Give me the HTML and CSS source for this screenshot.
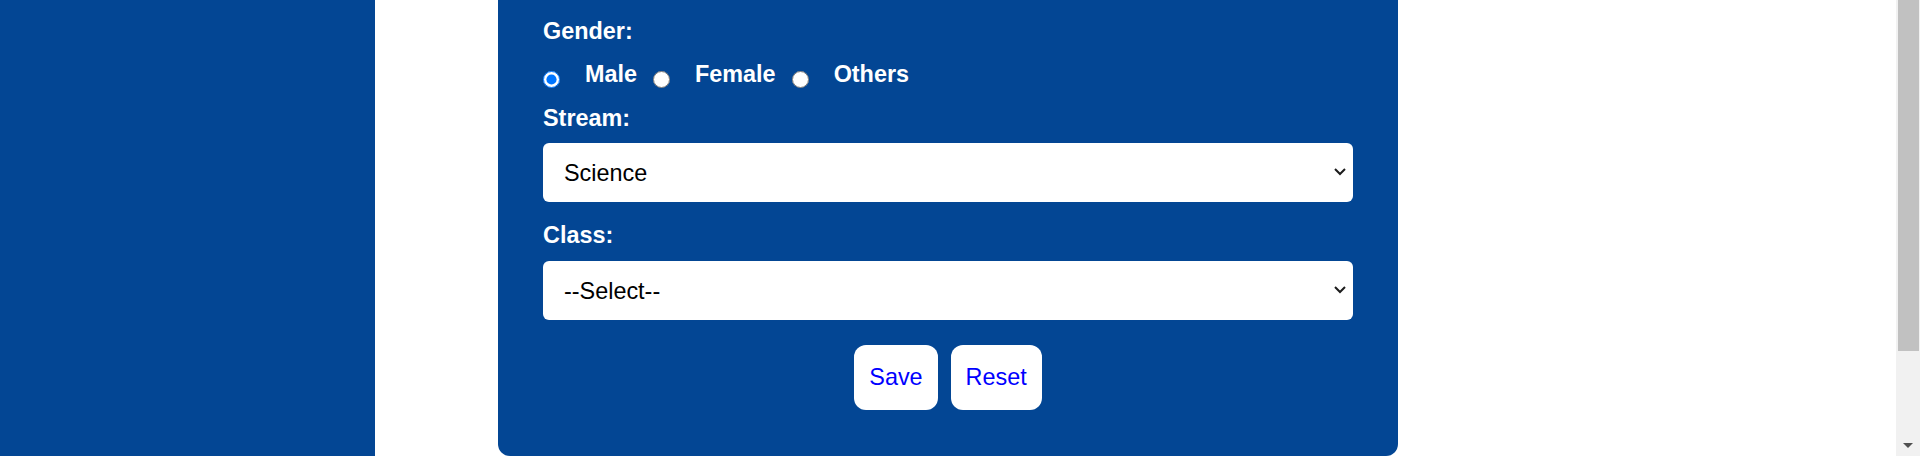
FILE: index.html
```html
<!DOCTYPE html>
<html lang="en">
<head>
<meta charset="utf-8">
<title>Student Form</title>
<link rel="stylesheet" href="styles.css">
</head>
<body>
<div class="page">
  <main class="main">
    <form class="card">
      <div class="label label-gender">Gender:</div>
      <div class="radio-row">
        <input class="radio" type="radio" name="gender" id="male" checked>
        <label class="radio-label" for="male">Male</label>
        <input class="radio" type="radio" name="gender" id="female">
        <label class="radio-label" for="female">Female</label>
        <input class="radio" type="radio" name="gender" id="others">
        <label class="radio-label" for="others">Others</label>
      </div>
      <div class="label label-stream">Stream:</div>
      <div class="select-wrap select-stream">
        <select class="select">
          <option>Science</option>
          <option>Commerce</option>
          <option>Arts</option>
        </select>
        <svg class="chevron" width="12" height="8" viewBox="0 0 12 8"><polyline points="1,1 6,6 11,1" fill="none" stroke="#1c1c1c" stroke-width="2"/></svg>
      </div>
      <div class="label label-class">Class:</div>
      <div class="select-wrap select-class">
        <select class="select">
          <option>--Select--</option>
          <option>XI</option>
          <option>XII</option>
        </select>
        <svg class="chevron" width="12" height="8" viewBox="0 0 12 8"><polyline points="1,1 6,6 11,1" fill="none" stroke="#1c1c1c" stroke-width="2"/></svg>
      </div>
      <div class="actions">
        <button type="button" class="btn">Save</button>
        <button type="reset" class="btn">Reset</button>
      </div>
    </form>
  </main>
  <div class="scrollbar">
    <div class="thumb"></div>
    <div class="track"></div>
    <div class="arrow"></div>
  </div>
</div>
</body>
</html>
```
FILE: styles.css
```css
html, body {
  margin: 0;
  padding: 0;
  height: 456px;
  overflow: hidden;
  background: #ffffff;
  font-family: "Liberation Sans", Arial, sans-serif;
}

.page {
  display: flex;
  height: 456px;
}

.main {
  flex: 1;
  background: linear-gradient(to right, #034694 0, #034694 375px, #ffffff 375px);
}

.card {
  width: 900px;
  box-sizing: border-box;
  margin: 0 auto;
  height: 456px;
  padding: 18px 45px 0;
  background: #034694;
  border-radius: 0 0 12px 12px;
  display: flex;
  flex-direction: column;
}

.label {
  color: #ffffff;
  font-weight: bold;
  font-size: 23.4px;
  line-height: 27px;
}

.radio-row {
  display: flex;
  align-items: flex-start;
  margin-top: 16px;
  color: #ffffff;
  font-weight: bold;
  font-size: 23.4px;
  line-height: 27px;
}

.radio {
  width: 17px;
  height: 17px;
  margin: 10px 25px 0 0;
  accent-color: #0075ff;
}

.radio-label {
  margin-right: 16px;
}

.label-stream {
  margin-top: 17px;
}

.label-class {
  margin-top: 20px;
}

.select-wrap {
  position: relative;
  height: 59px;
}

.select-stream {
  margin-top: 11px;
}

.select-class {
  margin-top: 12px;
}

.select {
  appearance: none;
  -webkit-appearance: none;
  width: 100%;
  height: 59px;
  box-sizing: border-box;
  border: none;
  border-radius: 6px;
  background: #ffffff;
  color: #000000;
  font-family: "Liberation Sans", Arial, sans-serif;
  font-size: 23.4px;
  padding: 0 21px;
  outline: none;
}

.chevron {
  position: absolute;
  right: 7px;
  top: 25px;
  pointer-events: none;
}

.actions {
  display: flex;
  justify-content: center;
  gap: 13px;
  margin-top: 25px;
}

.btn {
  height: 65px;
  padding: 0 15px;
  border: none;
  border-radius: 12px;
  background: #ffffff;
  color: #0000ff;
  font-family: "Liberation Sans", Arial, sans-serif;
  font-size: 23.4px;
}

.scrollbar {
  width: 24px;
  background: #f1f1f1;
  display: flex;
  flex-direction: column;
  align-items: center;
}

.thumb {
  width: 21px;
  height: 351px;
  margin-left: 1px;
  background: #c1c1c1;
}

.track {
  flex: 1;
}

.arrow {
  width: 0;
  height: 0;
  border-left: 5.5px solid transparent;
  border-right: 5.5px solid transparent;
  border-top: 5px solid #505050;
  margin-bottom: 8px;
}
```
